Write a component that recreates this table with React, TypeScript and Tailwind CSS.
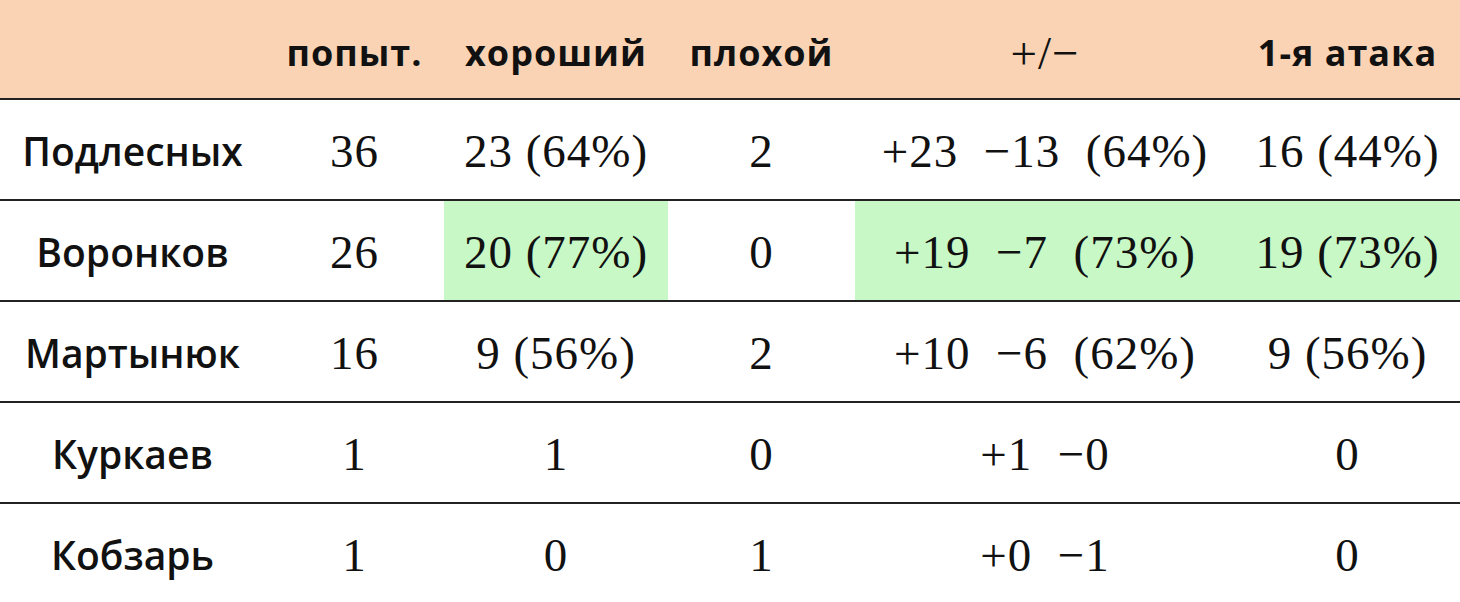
import React from 'react';

interface PlayerRow {
    name: string;
    attempts: string;
    good: string;
    bad: string;
    plusMinus: string;
    firstAttack: string;
    highlight?: boolean;
}

const rows: PlayerRow[] = [
    { name: 'Подлесных', attempts: '36', good: '23 (64%)', bad: '2', plusMinus: '+23  −13  (64%)', firstAttack: '16 (44%)' },
    { name: 'Воронков', attempts: '26', good: '20 (77%)', bad: '0', plusMinus: '+19  −7  (73%)', firstAttack: '19 (73%)', highlight: true },
    { name: 'Мартынюк', attempts: '16', good: '9 (56%)', bad: '2', plusMinus: '+10  −6  (62%)', firstAttack: '9 (56%)' },
    { name: 'Куркаев', attempts: '1', good: '1', bad: '0', plusMinus: '+1  −0', firstAttack: '0' },
    { name: 'Кобзарь', attempts: '1', good: '0', bad: '1', plusMinus: '+0  −1', firstAttack: '0' },
];

const cols = 'grid grid-cols-[265px_179px_224px_187px_380px_225px]';
const head = "flex items-center justify-center pt-2 font-['Open_Sans',sans-serif] font-bold text-[36px] tracking-[1px]";
const num = "flex items-center justify-center pt-1 font-['Liberation_Serif',serif] text-[47px] tracking-[1px]";

const App: React.FC = () => {
    return (
        <div className="w-[1460px] h-[602px] overflow-hidden bg-white text-[#111]">
            {/* Header */}
            <div className={`${cols} h-[100px] bg-[#f9d3b4] border-b-2 border-[#222]`}>
                <div />
                <div className={head}>попыт.</div>
                <div className={head}>хороший</div>
                <div className={head}>плохой</div>
                <div className={`${num} pt-2`}>+/−</div>
                <div className={head}>1-я атака</div>
            </div>

            {/* Rows */}
            {rows.map((row) => (
                <div key={row.name} className={`${cols} h-[101px] border-b-2 border-[#222]`}>
                    <div className="flex items-center justify-center pt-1 font-['Open_Sans',sans-serif] font-semibold text-[39px]">
                        {row.name}
                    </div>
                    <div className={num}>{row.attempts}</div>
                    <div className={`${num} ${row.highlight ? 'bg-[#c8f8c6]' : ''}`}>{row.good}</div>
                    <div className={num}>{row.bad}</div>
                    <div className={`${num} whitespace-pre ${row.highlight ? 'bg-[#c8f8c6]' : ''}`}>{row.plusMinus}</div>
                    <div className={`${num} ${row.highlight ? 'bg-[#c8f8c6]' : ''}`}>{row.firstAttack}</div>
                </div>
            ))}
        </div>
    );
};

export default App;
